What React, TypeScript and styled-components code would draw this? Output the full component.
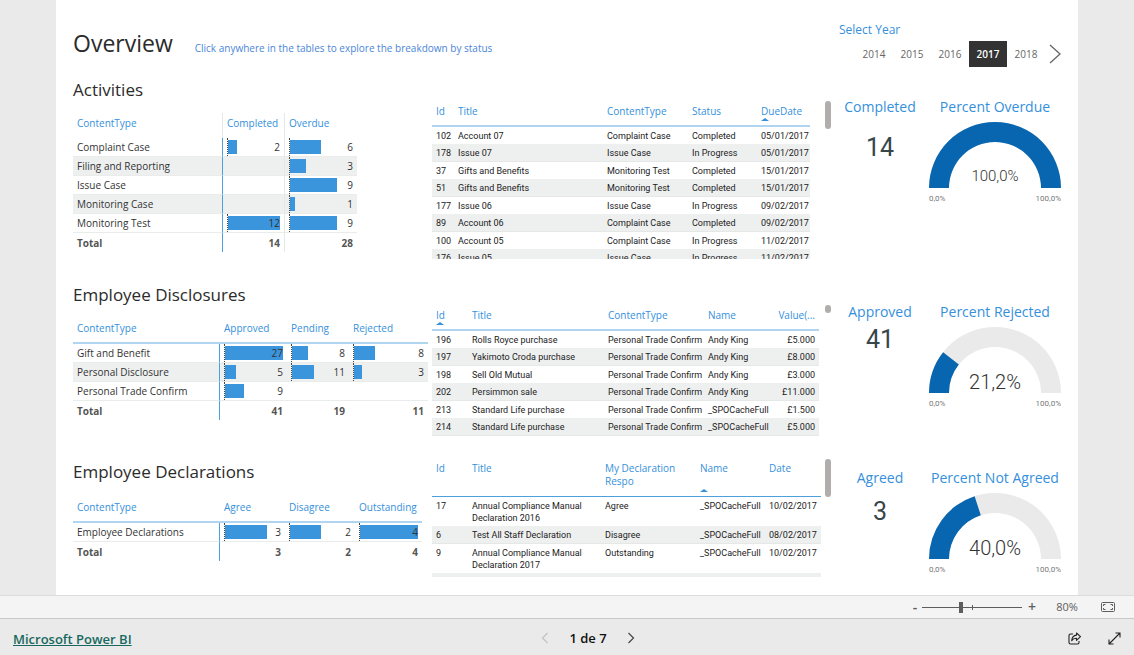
import React, { useState } from "react";
import styled, { createGlobalStyle } from "styled-components";

const ui = `"Open Sans", "Noto Sans", sans-serif`;
const blue = "#3590dc";

const Global = createGlobalStyle`
  * { box-sizing: border-box; }
  body { margin: 0; font-family: ${ui}; color: #333; }
  h1, h2, h3, p { margin: 0; font-weight: 400; }
  button { font: inherit; border: 0; padding: 0; background: none; cursor: pointer; color: inherit; }
`;

const Page = styled.div`
  min-height: 100vh;
  display: flex;
  flex-direction: column;
  background: #eaeaea;
`;

const Canvas = styled.main`
  flex: 1;
  margin: 0 56px;
  padding: 0 9px 0 17px;
  background: #fff;
`;

const columns = `
  display: grid;
  grid-template-columns: 355fr 403fr 230fr;
  column-gap: 4px;
`;

const Header = styled.header`
  ${columns}
  height: 77px;
`;

const Intro = styled.div`
  grid-column: span 2;
  display: flex;
  align-items: baseline;
  gap: 22px;
  padding-top: 26px;
`;

const PageTitle = styled.h1`
  font-size: 23px;
  line-height: 34px;
  color: #2b2b2b;
`;

const Hint = styled.p`
  font-size: 10px;
  line-height: 16px;
  color: #4a86d8;
`;

const Slicer = styled.div`
  padding-top: 21px;
`;

const SlicerLabel = styled.h3`
  font-size: 12px;
  line-height: 18px;
  color: ${blue};
`;

const Years = styled.div`
  display: flex;
  align-items: center;
  padding: 2px 0 0 16px;
`;

const Year = styled.button<{ $on: boolean }>`
  width: 38px;
  height: 26px;
  font-size: 10px;
  font-weight: ${(p) => (p.$on ? 600 : 400)};
  color: ${(p) => (p.$on ? "#fff" : "#666")};
  background: ${(p) => (p.$on ? "#333" : "transparent")};
`;

const NextYears = styled.button`
  display: flex;
  margin-left: 3px;
`;

const Section = styled.section<{ $height: number }>`
  ${columns}
  min-height: ${(p) => p.$height}px;
`;

const SectionTitle = styled.h2<{ $gap: number }>`
  font-size: 17px;
  line-height: 26px;
  margin-bottom: ${(p) => p.$gap}px;
  color: #2b2b2b;
`;

const Matrix = styled.table<{ $width: number; $lined?: boolean }>`
  width: ${(p) => p.$width}%;
  table-layout: fixed;
  border-collapse: separate;
  border-spacing: 0;
  font-size: 10px;

  th, td {
    height: 19px;
    padding: 0 4px;
    line-height: 18px;
    text-align: left;
    white-space: nowrap;
    font-weight: 400;
    border-bottom: 1px solid #eaeceb;
  }
  thead th {
    height: 25px;
    color: ${blue};
    vertical-align: ${(p) => (p.$lined ? "top" : "middle")};
    padding-bottom: ${(p) => (p.$lined ? 0 : 6)}px;
    border-bottom: ${(p) => (p.$lined ? "2px solid #b0d5f1" : "0")};
  }
  tbody th, tfoot th { border-right: 1px solid #4ba0dd; }
  tbody tr:nth-child(even) { background: #eef0f0; }
  tfoot th, tfoot td { font-weight: 700; color: #555; border-bottom: 0; }
  tfoot td { text-align: right; }
  ${(p) =>
    !p.$lined &&
    `thead th:not(:last-child), tbody td:not(:last-child), tfoot td:not(:last-child) {
      border-right: 1px solid #e6e8e8;
    }`}
`;

const Col = styled.col<{ $w: number }>`
  width: ${(p) => p.$w}px;
`;

const BarCell = styled.div`
  position: relative;
  height: 18px;
  text-align: right;
  border-left: 1px dotted #444;
`;

const Bar = styled.div`
  position: absolute;
  left: 0;
  top: 2px;
  height: 14px;
  background: #3a95dd;
`;

const BarValue = styled.span`
  position: relative;
`;

type MatrixData = {
  label: string;
  width: number;
  lined?: boolean;
  cols: { name: string; w: number; unit: number; total: number }[];
  first: number;
  rows: { name: string; values: (number | null)[] }[];
};

function MatrixTable({ data }: { data: MatrixData }) {
  return (
    <Matrix $width={data.width} $lined={data.lined} aria-label={data.label}>
      <colgroup>
        <Col $w={data.first} />
        {data.cols.map((c) => <Col key={c.name} $w={c.w} />)}
      </colgroup>
      <thead>
        <tr>
          <th scope="col">ContentType</th>
          {data.cols.map((c) => <th scope="col" key={c.name}>{c.name}</th>)}
        </tr>
      </thead>
      <tbody>
        {data.rows.map((r) => (
          <tr key={r.name}>
            <th scope="row">{r.name}</th>
            {r.values.map((v, i) => (
              <td key={i}>
                {v !== null && (
                  <BarCell>
                    <Bar style={{ width: `${v * data.cols[i].unit}%` }} />
                    <BarValue>{v}</BarValue>
                  </BarCell>
                )}
              </td>
            ))}
          </tr>
        ))}
      </tbody>
      <tfoot>
        <tr>
          <th scope="row">Total</th>
          {data.cols.map((c) => <td key={c.name}>{c.total}</td>)}
        </tr>
      </tfoot>
    </Matrix>
  );
}

const Detail = styled.div<{ $top: number }>`
  display: flex;
  justify-content: space-between;
  align-items: flex-start;
  padding: ${(p) => p.$top}px 4px 0 0;
`;

const Clip = styled.div<{ $height: number; $gap: number }>`
  flex: 0 1 auto;
  width: 100%;
  margin: ${(p) => p.$gap}px 4px 0 0;
  max-height: ${(p) => p.$height}px;
  overflow: hidden;
`;

const Thumb = styled.div<{ $h: number }>`
  flex: none;
  width: 6px;
  height: ${(p) => p.$h}px;
  border-radius: 3px;
  background: #b0aeac;
`;

const Grid = styled.table<{ $width: number; $head: number; $strong?: boolean }>`
  width: ${(p) => p.$width}%;
  table-layout: fixed;
  border-collapse: separate;
  border-spacing: 0;
  font-family: Roboto, sans-serif;
  font-size: 9px;
  line-height: 12px;

  th {
    height: ${(p) => p.$head}px;
    padding: 2px 0 0 4px;
    font-family: ${ui};
    font-size: 10px;
    line-height: 13px;
    font-weight: 400;
    text-align: left;
    vertical-align: top;
    color: ${blue};
    border-bottom: ${(p) => (p.$strong ? "1px solid #4ba0dd" : "2px solid #b0d5f1")};
  }
  td {
    padding: 3px 0 2px 4px;
    vertical-align: top;
    color: #222;
  }
  tbody tr:nth-child(even) td {
    background: #eef0f0;
    border-bottom: 1px solid #e6e8e8;
  }
`;

const HeadCell = styled.th<{ $right?: boolean }>`
  position: relative;
  && {
    text-align: ${(p) => (p.$right ? "right" : "left")};
    padding-right: ${(p) => (p.$right ? 4 : 0)}px;
  }
`;

const Sorted = styled.span`
  position: absolute;
  left: 4px;
  bottom: 4px;
  border: 4px solid transparent;
  border-top: 0;
  border-bottom: 3px solid ${blue};
`;

const Cell = styled.td<{ $right?: boolean }>`
  && {
    text-align: ${(p) => (p.$right ? "right" : "left")};
    padding-right: ${(p) => (p.$right ? 4 : 0)}px;
  }
`;

type GridData = {
  label: string;
  width: number;
  head: number;
  strong?: boolean;
  sort: number;
  cols: [string, number, boolean?][];
  rows: string[][];
};

function DetailTable({ data }: { data: GridData }) {
  return (
    <Grid $width={data.width} $head={data.head} $strong={data.strong} aria-label={data.label}>
      <colgroup>
        {data.cols.map(([n, w]) => <Col key={n} $w={w} />)}
      </colgroup>
      <thead>
        <tr>
          {data.cols.map(([n, , right], i) => (
            <HeadCell scope="col" key={n} $right={right}>
              {n}
              {i === data.sort && <Sorted />}
            </HeadCell>
          ))}
        </tr>
      </thead>
      <tbody>
        {data.rows.map((r, i) => (
          <tr key={i}>
            {r.map((c, j) => <Cell key={j} $right={data.cols[j][2]}>{c}</Cell>)}
          </tr>
        ))}
      </tbody>
    </Grid>
  );
}

const Kpis = styled.div<{ $top: number }>`
  display: grid;
  grid-template-columns: 82fr 148fr;
  align-content: start;
  padding-top: ${(p) => p.$top}px;
  text-align: center;
`;

const KpiTitle = styled.h3`
  font-size: 14px;
  line-height: 20px;
  white-space: nowrap;
  color: ${blue};
`;

const KpiValue = styled.p<{ $gap: number }>`
  margin-top: ${(p) => p.$gap}px;
  font-family: Roboto, sans-serif;
  font-size: 25px;
  line-height: 32px;
  color: #374649;
`;

const GaugeSvg = styled.svg`
  display: block;
  margin: 5px auto 0;
  font-family: Roboto, sans-serif;
  font-weight: 300;
`;

function Gauge({ percent, label, size }: { percent: number; label: string; size: number }) {
  const a = Math.PI * (1 - percent / 100);
  const p = (r: number) => `${66 + r * Math.cos(a)} ${66 - r * Math.sin(a)}`;
  return (
    <GaugeSvg width="132" height="84" viewBox="0 0 132 84" role="img" aria-label={label}>
      <path d="M0 66A66 66 0 0 1 132 66H112A46 46 0 0 0 20 66Z" fill="#eaeaea" />
      <path d={`M0 66A66 66 0 0 1 ${p(66)}L${p(46)}A46 46 0 0 0 20 66Z`} fill="#0766af" />
      <text x="66" y={size > 16 ? 62 : 59} fontSize={size} textAnchor="middle" fill="#333">{label}</text>
      <text x="0" y="79" fontSize="8" fontWeight="400" fill="#777">0,0%</text>
      <text x="132" y="79" fontSize="8" fontWeight="400" textAnchor="end" fill="#777">100,0%</text>
    </GaugeSvg>
  );
}

const StatusBar = styled.div`
  display: flex;
  align-items: center;
  justify-content: flex-end;
  height: 24px;
  padding-right: 19px;
  background: #f4f4f4;
  border-top: 1px solid #dcdcdc;
  border-bottom: 1px solid #c8c8c8;
  color: #605e5c;
`;

const ZoomStep = styled.button`
  width: 10px;
  font-size: 14px;
  line-height: 20px;
  font-weight: 600;
`;

const ZoomRange = styled.input`
  appearance: none;
  width: 100px;
  height: 11px;
  margin: 0 5px 0 2px;
  background:
    linear-gradient(#605e5c, #605e5c) 50px 3px / 1px 5px no-repeat,
    linear-gradient(#605e5c, #605e5c) 0 5px / 100% 1px no-repeat;
  &::-webkit-slider-thumb {
    appearance: none;
    width: 4px;
    height: 11px;
    background: #605e5c;
  }
`;

const ZoomValue = styled.output`
  width: 50px;
  padding-left: 10px;
  text-align: center;
  font-size: 11px;
  line-height: 18px;
`;

const FitButton = styled.button`
  display: flex;
  margin-left: 14px;
`;

const Footer = styled.footer`
  display: grid;
  grid-template-columns: 1fr auto 1fr;
  align-items: center;
  height: 36px;
  padding: 2px 13px 0;
`;

const Brand = styled.a`
  font-size: 13px;
  font-weight: 600;
  color: #17695f;
`;

const Pager = styled.nav`
  display: flex;
  align-items: center;
  gap: 20px;
  padding-left: 42px;
  font-size: 13px;
  font-weight: 600;
  color: #111;
`;

const IconButton = styled.button`
  display: flex;
`;

const Actions = styled.div`
  display: flex;
  justify-content: flex-end;
  gap: 26px;
`;

const activities: MatrixData = {
  label: "Activities",
  width: 80,
  first: 150,
  cols: [
    { name: "Completed", w: 62, unit: 8.3, total: 14 },
    { name: "Overdue", w: 72, unit: 8.3, total: 28 },
  ],
  rows: [
    { name: "Complaint Case", values: [2, 6] },
    { name: "Filing and Reporting", values: [null, 3] },
    { name: "Issue Case", values: [null, 9] },
    { name: "Monitoring Case", values: [null, 1] },
    { name: "Monitoring Test", values: [12, 9] },
  ],
};

const disclosures: MatrixData = {
  label: "Employee Disclosures",
  width: 100,
  lined: true,
  first: 147,
  cols: [
    { name: "Approved", w: 67, unit: 3.7, total: 41 },
    { name: "Pending", w: 62, unit: 3.8, total: 19 },
    { name: "Rejected", w: 79, unit: 3.7, total: 11 },
  ],
  rows: [
    { name: "Gift and Benefit", values: [27, 8, 8] },
    { name: "Personal Disclosure", values: [5, 11, 3] },
    { name: "Personal Trade Confirm", values: [9, null, null] },
  ],
};

const declarations: MatrixData = {
  label: "Employee Declarations",
  width: 98,
  lined: true,
  first: 147,
  cols: [
    { name: "Agree", w: 65, unit: 25, total: 3 },
    { name: "Disagree", w: 70, unit: 25, total: 2 },
    { name: "Outstanding", w: 67, unit: 25, total: 4 },
  ],
  rows: [{ name: "Employee Declarations", values: [3, 2, 4] }],
};

const activityRows: GridData = {
  label: "Activity items",
  width: 97,
  head: 24,
  sort: 4,
  cols: [["Id", 22], ["Title", 149], ["ContentType", 85], ["Status", 69], ["DueDate", 53]],
  rows: [
    ["102", "Account 07", "Complaint Case", "Completed", "05/01/2017"],
    ["178", "Issue 07", "Issue Case", "In Progress", "05/01/2017"],
    ["37", "Gifts and Benefits", "Monitoring Test", "Completed", "15/01/2017"],
    ["51", "Gifts and Benefits", "Monitoring Test", "Completed", "15/01/2017"],
    ["177", "Issue 06", "Issue Case", "In Progress", "09/02/2017"],
    ["89", "Account 06", "Complaint Case", "Completed", "09/02/2017"],
    ["100", "Account 05", "Complaint Case", "In Progress", "11/02/2017"],
    ["176", "Issue 05", "Issue Case", "In Progress", "11/02/2017"],
  ],
};

const disclosureRows: GridData = {
  label: "Disclosure items",
  width: 99,
  head: 24,
  sort: 0,
  cols: [["Id", 36], ["Title", 136], ["ContentType", 100], ["Name", 70], ["Value(...", 45, true]],
  rows: [
    ["196", "Rolls Royce purchase", "Personal Trade Confirm", "Andy King", "£5.000"],
    ["197", "Yakimoto Croda purchase", "Personal Trade Confirm", "Andy King", "£8.000"],
    ["198", "Sell Old Mutual", "Personal Trade Confirm", "Andy King", "£3.000"],
    ["202", "Persimmon sale", "Personal Trade Confirm", "Andy King", "£11.000"],
    ["213", "Standard Life purchase", "Personal Trade Confirm", "_SPOCacheFull", "£1.500"],
    ["214", "Standard Life purchase", "Personal Trade Confirm", "_SPOCacheFull", "£5.000"],
  ],
};

const declarationRows: GridData = {
  label: "Declaration items",
  width: 100,
  head: 37,
  strong: true,
  sort: 3,
  cols: [["Id", 36], ["Title", 133], ["My Declaration Respo", 95], ["Name", 69], ["Date", 56]],
  rows: [
    ["17", "Annual Compliance Manual Declaration 2016", "Agree", "_SPOCacheFull", "10/02/2017"],
    ["6", "Test All Staff Declaration", "Disagree", "_SPOCacheFull", "08/02/2017"],
    ["9", "Annual Compliance Manual Declaration 2017", "Outstanding", "_SPOCacheFull", "10/02/2017"],
    ["", "", "", "", ""],
  ],
};

export default function App() {
  const [year, setYear] = useState(2017);
  const [zoom, setZoom] = useState(80);
  return (
    <Page>
      <Global />
      <Canvas>
        <Header>
          <Intro>
            <PageTitle>Overview</PageTitle>
            <Hint>Click anywhere in the tables to explore the breakdown by status</Hint>
          </Intro>
          <Slicer>
            <SlicerLabel>Select Year</SlicerLabel>
            <Years>
              {[2014, 2015, 2016, 2017, 2018].map((y) => (
                <Year key={y} $on={y === year} aria-pressed={y === year} onClick={() => setYear(y)}>
                  {y}
                </Year>
              ))}
              <NextYears aria-label="Later years">
                <svg width="14" height="20" viewBox="0 0 14 20" fill="none" stroke="#666" strokeWidth="1.3">
                  <path d="M2 1l10 9-10 9" />
                </svg>
              </NextYears>
            </Years>
          </Slicer>
        </Header>

        <Section $height={205}>
          <div>
            <SectionTitle $gap={10}>Activities</SectionTitle>
            <MatrixTable data={activities} />
          </div>
          <Detail $top={24}>
            <Clip $height={156} $gap={2}><DetailTable data={activityRows} /></Clip>
            <Thumb $h={28} />
          </Detail>
          <Kpis $top={20}>
            <div>
              <KpiTitle>Completed</KpiTitle>
              <KpiValue $gap={15}>14</KpiValue>
            </div>
            <div>
              <KpiTitle>Percent Overdue</KpiTitle>
              <Gauge percent={100} label="100,0%" size={15} />
            </div>
          </Kpis>
        </Section>

        <Section $height={177}>
          <div>
            <SectionTitle $gap={11}>Employee Disclosures</SectionTitle>
            <MatrixTable data={disclosures} />
          </div>
          <Detail $top={23}>
            <Clip $height={130} $gap={2}><DetailTable data={disclosureRows} /></Clip>
            <Thumb $h={8} />
          </Detail>
          <Kpis $top={20}>
            <div>
              <KpiTitle>Approved</KpiTitle>
              <KpiValue $gap={2}>41</KpiValue>
            </div>
            <div>
              <KpiTitle>Percent Rejected</KpiTitle>
              <Gauge percent={21.2} label="21,2%" size={20} />
            </div>
          </Kpis>
        </Section>

        <Section $height={136}>
          <div>
            <SectionTitle $gap={13}>Employee Declarations</SectionTitle>
            <MatrixTable data={declarations} />
          </div>
          <Detail $top={0}>
            <Clip $height={117} $gap={1}><DetailTable data={declarationRows} /></Clip>
            <Thumb $h={38} />
          </Detail>
          <Kpis $top={9}>
            <div>
              <KpiTitle>Agreed</KpiTitle>
              <KpiValue $gap={8}>3</KpiValue>
            </div>
            <div>
              <KpiTitle>Percent Not Agreed</KpiTitle>
              <Gauge percent={40} label="40,0%" size={20} />
            </div>
          </Kpis>
        </Section>
      </Canvas>

      <StatusBar>
        <ZoomStep aria-label="Zoom out" onClick={() => setZoom(zoom - 10)}>-</ZoomStep>
        <ZoomRange
          type="range"
          aria-label="Zoom"
          min={3}
          max={203}
          value={zoom}
          onChange={(e) => setZoom(Number(e.target.value))}
        />
        <ZoomStep aria-label="Zoom in" onClick={() => setZoom(zoom + 10)}>+</ZoomStep>
        <ZoomValue>{zoom}%</ZoomValue>
        <FitButton aria-label="Fit to page">
          <svg width="14" height="10" viewBox="0 0 14 10" fill="none" stroke="#605e5c">
            <rect x="0.5" y="0.5" width="13" height="9" rx="1" />
            <path d="M2.500 4V2.500H4.500M9.500 2.500h2V4M2.500 6v1.500h2M9.500 7.500h2V6" />
          </svg>
        </FitButton>
      </StatusBar>

      <Footer>
        <div>
          <Brand href="#">Microsoft Power BI</Brand>
        </div>
        <Pager aria-label="Pages">
          <IconButton aria-label="Previous page">
            <svg width="8" height="12" viewBox="0 0 8 12" fill="none" stroke="#c0c0c0" strokeWidth="1.1">
              <path d="M6.500 1l-5 5 5 5" />
            </svg>
          </IconButton>
          <span>1 de 7</span>
          <IconButton aria-label="Next page">
            <svg width="8" height="12" viewBox="0 0 8 12" fill="none" stroke="#444" strokeWidth="1.2">
              <path d="M1.500 1l5 5-5 5" />
            </svg>
          </IconButton>
        </Pager>
        <Actions>
          <IconButton aria-label="Share">
            <svg width="14" height="13" viewBox="0 0 14 13" fill="none" stroke="#222" strokeWidth="1.1" strokeLinejoin="round">
              <path d="M5 2H2.500A1.500 1.500 0 0 0 1 3.500v7A1.500 1.500 0 0 0 2.500 12h7a1.500 1.500 0 0 0 1.500-1.500V9" />
              <path d="M8.500 1l4 3.700-4 3.700V6.300C6.300 6.200 4.800 7 3.700 8.700 4 5.400 5.600 3.400 8.500 3.100z" />
            </svg>
          </IconButton>
          <IconButton aria-label="Full screen">
            <svg width="13" height="13" viewBox="0 0 13 13" fill="none" stroke="#222" strokeWidth="1.1">
              <path d="M1 12L12 1M7.500 1H12v4.500M1 7.500V12h4.500" />
            </svg>
          </IconButton>
        </Actions>
      </Footer>
    </Page>
  );
}
